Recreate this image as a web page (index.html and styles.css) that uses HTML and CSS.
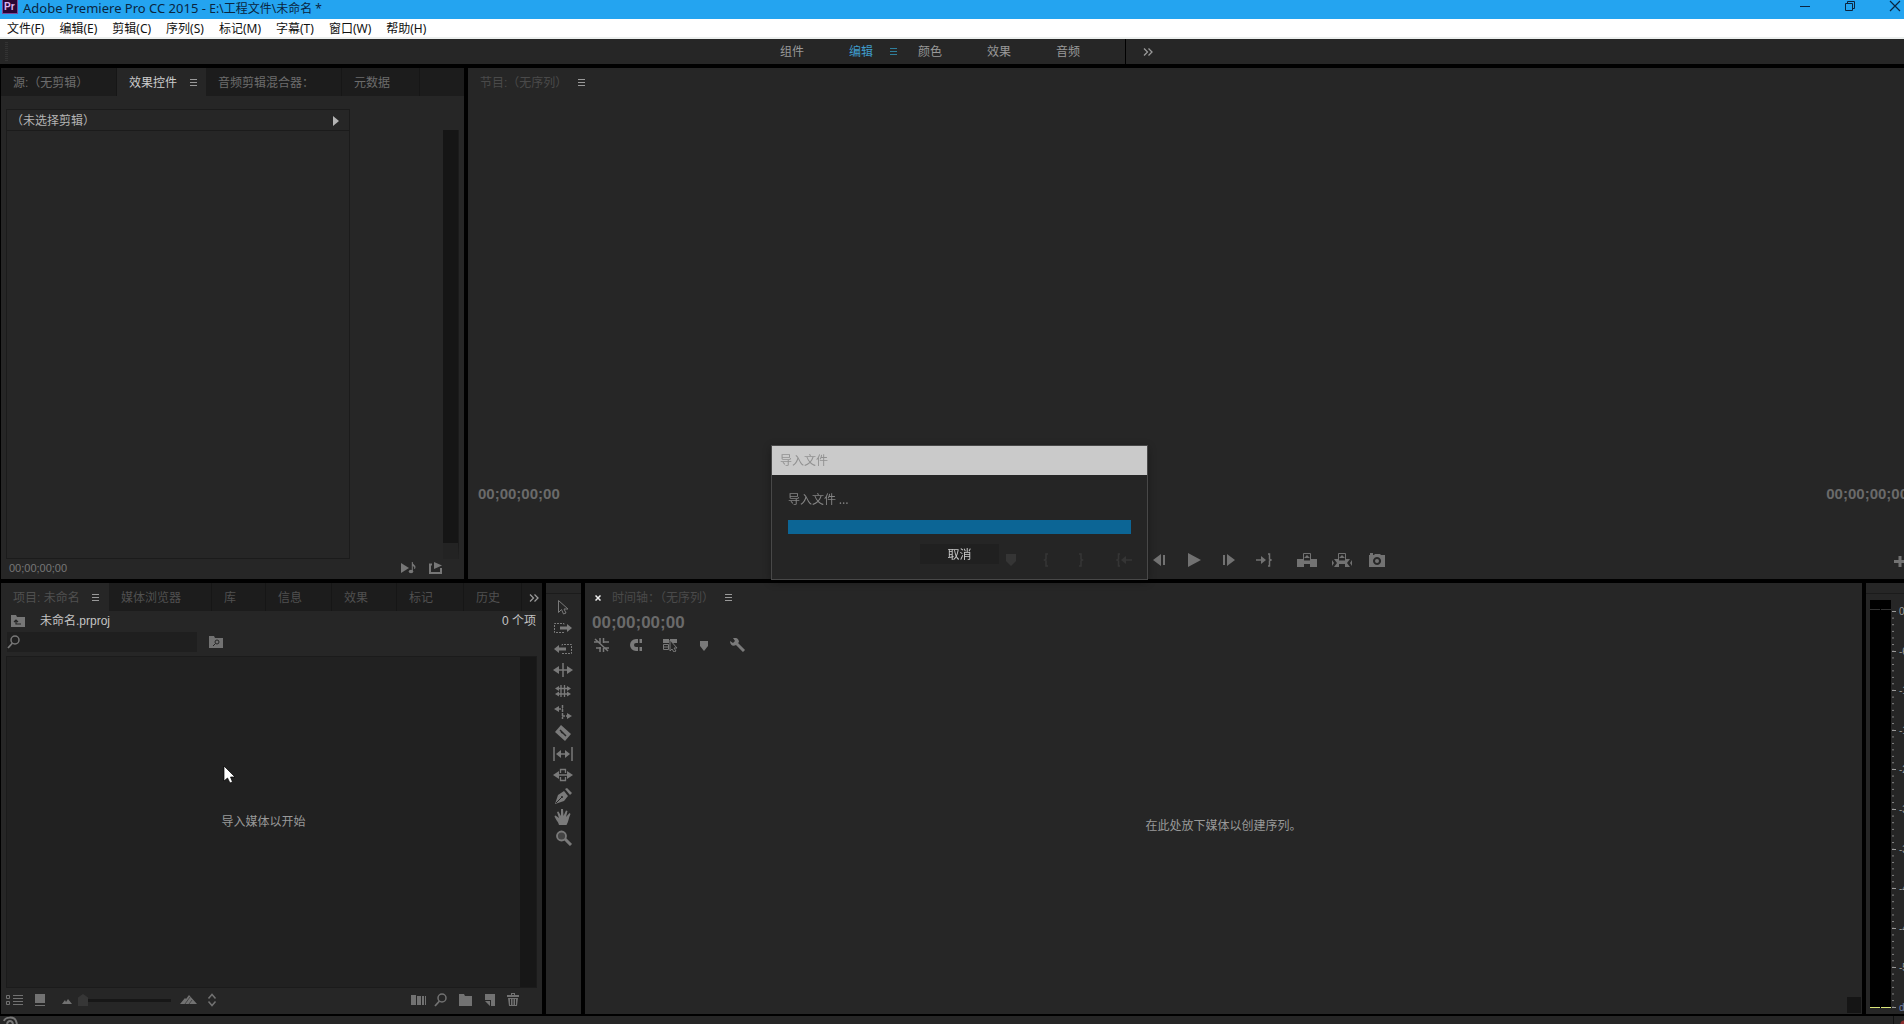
FILE: index.html
```html
<!DOCTYPE html>
<html lang="zh-CN">
<head>
    <meta charset="utf-8">
    <meta name="viewport" content="width=device-width, initial-scale=1.0">
    <title>Adobe Premiere Pro CC 2015</title>
    <link rel="stylesheet" href="styles.css">
</head>
<body>

    <!-- shared icons -->
    <svg class="defs" aria-hidden="true">
        <symbol id="menu" viewBox="0 0 8 8"><path d="M0 .5h7M0 3.5h7M0 6.5h7" stroke="currentColor"/></symbol>
        <symbol id="more" viewBox="0 0 10 8"><path d="M1 .5l3.5 3.5L1 7.5M5.500 .5L9 4 5.500 7.500" fill="none" stroke="currentColor" stroke-width="1.300"/></symbol>
        <symbol id="search" viewBox="0 0 14 14"><circle cx="8" cy="5" r="4" fill="none" stroke="currentColor" stroke-width="1.500"/><path d="M5.500 8L1 13" stroke="currentColor" stroke-width="1.800"/></symbol>
    </svg>

    <header class="titlebar">
        <svg class="logo" viewBox="0 0 16 16"><rect x=".5" y="-2" width="15" height="15.500" fill="#2a0634" stroke="#7a4a9a"/><text x="2" y="10" font-size="10" font-weight="bold" fill="#dcb4f0">Pr</text></svg>
        <h1>Adobe Premiere Pro CC 2015 - <span>E:\工程文件\未命名 *</span></h1>
        <div class="window-buttons">
            <button aria-label="最小化"><svg width="12" height="12"><path d="M1 6.500h10" stroke="#0a2540"/></svg></button>
            <button aria-label="还原"><svg width="12" height="12"><path d="M1.500 3.500h7v7h-7zM3.500 3V1.500h7v7H9" fill="none" stroke="#0a2540"/></svg></button>
            <button aria-label="关闭"><svg width="12" height="12"><path d="M1 1l10 10M11 1L1 11" stroke="#0a2540" stroke-width="1.200"/></svg></button>
        </div>
    </header>

    <nav class="menubar">
        <button>文件(F)</button>
        <button>编辑(E)</button>
        <button>剪辑(C)</button>
        <button>序列(S)</button>
        <button>标记(M)</button>
        <button>字幕(T)</button>
        <button>窗口(W)</button>
        <button>帮助(H)</button>
    </nav>

    <nav class="workspaces">
        <span class="grip"></span>
        <button>组件</button>
        <button class="on">编辑<svg class="burger"><use href="#menu"/></svg></button>
        <button>颜色</button>
        <button>效果</button>
        <button>音频</button>
        <button class="overflow" aria-label="更多工作区"><svg class="more"><use href="#more"/></svg></button>
    </nav>

    <main>
        <div class="row row-top">
            <section class="panel effects">
                <div class="tabs">
                    <button>源:（无剪辑）</button>
                    <button class="active">效果控件<svg class="burger"><use href="#menu"/></svg></button>
                    <button>音频剪辑混合器：</button>
                    <button>元数据</button>
                </div>
                <div class="effects-body">
                    <div class="clip">
                        <div class="clip-name">（未选择剪辑）<svg width="6" height="10"><path d="M0 0l6 5-6 5z" fill="#b4b4b4"/></svg></div>
                    </div>
                    <div class="clip-scroll"></div>
                </div>
                <div class="effects-foot">
                    <span>00;00;00;00</span>
                    <button aria-label="播放音频"><svg width="16" height="12" fill="#777"><path d="M0 1l8 5-8 5z"/><ellipse cx="10" cy="9.500" rx="2.300" ry="1.800"/><path d="M11.300 0v9.500" stroke="#777"/><path d="M11 0c1 3 5 3 3 7l-1-.5c1-2-1-2-2-3z"/></svg></button>
                    <button aria-label="导出"><svg width="16" height="12"><path d="M4 2.500H2V11h11V6" fill="none" stroke="#777" stroke-width="2"/><path d="M6 0l8 3.500-8 3.500z" fill="#777"/></svg></button>
                </div>
            </section>

            <section class="panel program">
                <div class="panel-title">节目:（无序列）<svg class="burger"><use href="#menu"/></svg></div>
                <div class="monitor"></div>
                <div class="times">
                    <span>00;00;00;00</span>
                    <span>00;00;00;00</span>
                </div>
                <div class="transport">
                    <div class="group">
                        <button aria-label="添加标记"><svg width="16" height="14"><path d="M3 1h10v7l-5 5-5-5z" fill="currentColor"/></svg></button>
                        <button aria-label="标记入点"><svg width="16" height="14"><path d="M10 1H8v5L6.500 7 8 8v5h2" fill="none" stroke="currentColor" stroke-width="1.500"/></svg></button>
                        <button aria-label="标记出点"><svg width="16" height="14"><path d="M6 1h2v5l1.500 1L8 8v5H6" fill="none" stroke="currentColor" stroke-width="1.500"/></svg></button>
                    </div>
                    <div class="group">
                        <button aria-label="转到入点"><svg width="16" height="14"><path d="M4 1H2.500v5L1 7l1.500 1v5H4M9 7h7" fill="none" stroke="currentColor" stroke-width="1.500"/><path d="M5 7l5-4v8z" fill="currentColor"/></svg></button>
                        <button aria-label="后退一帧"><svg width="16" height="14" fill="currentColor"><path d="M10 1v12L2 7zM12 2h2v10h-2z"/></svg></button>
                        <button aria-label="播放"><svg width="16" height="14" fill="currentColor"><path d="M2 0l13 7-13 7z"/></svg></button>
                        <button aria-label="前进一帧"><svg width="16" height="14" fill="currentColor"><path d="M2 2h2v10H2zM6 1v12l8-6z"/></svg></button>
                        <button aria-label="转到出点"><svg width="16" height="14"><path d="M12 1h1.500v5L15 7l-1.500 1v5H12M0 7h6" fill="none" stroke="currentColor" stroke-width="1.500"/><path d="M10 7L5 3v8z" fill="currentColor"/></svg></button>
                    </div>
                    <div class="group">
                        <button aria-label="提升"><svg width="20" height="14" fill="currentColor"><path d="M0 6h6v2h8V6h6v8h-7v-3H7v3H0zM7 5l3-3 3 3z"/><path d="M6.500 .5h7V8h-7z" fill="none" stroke="currentColor"/></svg></button>
                        <button aria-label="提取"><svg width="20" height="14" fill="currentColor"><path d="M2 6h4v2h8V6h4l-3 4 3 4h-5v-3H7v3H2l3-4zM0 7l2 3-2 3zM20 7l-2 3 2 3zM7 5l3-3 3 3z"/><path d="M6.500 .5h7V8h-7z" fill="none" stroke="currentColor"/></svg></button>
                        <button aria-label="导出帧"><svg width="18" height="14" fill="currentColor"><path fill-rule="evenodd" d="M1 2h1V0h3v2h1l1-1h5l1 1h4v12H1zM9 4a4 4 0 1 0 .1 0z"/><circle cx="9" cy="8" r="2"/></svg></button>
                    </div>
                    <button class="plus" aria-label="按钮编辑器"><svg width="12" height="12"><path d="M6 0v11M0 5.500h12" stroke="currentColor" stroke-width="3"/></svg></button>
                </div>
            </section>
        </div>

        <div class="row row-bottom">
            <section class="panel project">
                <div class="tabs">
                    <button class="active">项目: 未命名<svg class="burger"><use href="#menu"/></svg></button>
                    <button>媒体浏览器</button>
                    <button>库</button>
                    <button>信息</button>
                    <button>效果</button>
                    <button>标记</button>
                    <button>历史</button>
                    <button class="tabs-more" aria-label="更多面板"><svg class="more"><use href="#more"/></svg></button>
                </div>
                <div class="path">
                    <svg width="14" height="12"><path fill="#777" d="M0 0h5l1 2h8v10H0z"/><path d="M10 9H5V5M3 7l2-2 2 2" fill="none" stroke="#262626" stroke-width="1.200"/></svg>
                    <span>未命名.prproj</span>
                    <span class="count">0 个项</span>
                </div>
                <div class="find">
                    <label><svg class="search"><use href="#search"/></svg><input type="text" aria-label="搜索"></label>
                    <button aria-label="新建搜索素材箱"><svg width="14" height="12"><path fill="#727272" d="M0 0h5l1 2h8v10H0z"/><circle cx="8" cy="6" r="2" fill="none" stroke="#262626"/><path d="M6.500 7.500L4 10" stroke="#262626"/></svg></button>
                </div>
                <div class="bin">
                    <p>导入媒体以开始</p>
                    <div class="bin-scroll"></div>
                </div>
                <div class="bin-tools">
                    <button aria-label="列表视图"><svg width="18" height="12"><path d="M.5 1.500h3v3h-3zM.5 7.500h3v3h-3z" fill="none" stroke="currentColor"/><path d="M7 1.500h10M7 4.500h10M7 7.500h10M7 10.500h10" stroke="currentColor"/></svg></button>
                    <button class="icon-view" aria-label="图标视图"><svg width="10" height="12" fill="currentColor"><path d="M0 0h10v9H0zM0 11h10v1H0z"/></svg></button>
                    <button class="zoom-out" aria-label="缩小"><svg width="10" height="12" fill="currentColor"><path d="M0 10l3-4 1 2 2-3 4 5z"/></svg></button>
                    <input type="range" min="0" max="100" value="0" aria-label="缩放">
                    <button class="zoom-in" aria-label="放大"><svg width="18" height="12" fill="currentColor"><path d="M0 10l5-6 1 1 3-4 8 9z"/><path d="M5 10l5-7M9 10l3-4" stroke="#262626" stroke-width=".6"/></svg></button>
                    <button aria-label="排序图标"><svg width="10" height="14"><path d="M1.500 5.500l3.500-4 3.500 4M1.500 8.500l3.500 4 3.500-4" fill="none" stroke="currentColor" stroke-width="1.500"/></svg></button>
                    <span class="right">
                        <button aria-label="自动匹配序列"><svg width="16" height="12" fill="currentColor"><path d="M0 1h5v10H0zM6 2h4v9H6zM11 2h2v9h-2zM14 2h1v9h-1z"/></svg></button>
                        <button aria-label="查找"><svg class="search"><use href="#search"/></svg></button>
                        <button aria-label="新建素材箱"><svg width="14" height="12" fill="currentColor"><path d="M0 0h5l1 2h7v10H0z"/></svg></button>
                        <button aria-label="新建项"><svg width="12" height="12" fill="currentColor"><path d="M1 0h10v12H7V6H1zM1 7h5v5z"/></svg></button>
                        <button aria-label="清除"><svg width="12" height="14" fill="currentColor"><path fill-rule="evenodd" d="M0 2h4V0h4v2h4v2H0zM5 1v1h2V1zM1 5h10l-1 8H2zM3 6v6h1V6zM5.500 6v6h1V6zM8 6v6h1V6z"/></svg></button>
                    </span>
                </div>
            </section>

            <section class="panel tools">
                <button aria-label="选择"><svg><path d="M5.500 1.500v12l3-3 2 4.500 2.500-1-2-4h4z" fill="none" stroke="currentColor"/></svg></button>
                <button aria-label="向前选择轨道"><svg><path d="M11 4.500V3.500H1.500v9H11v-1" fill="none" stroke="currentColor" stroke-dasharray="2 1"/><path d="M7 6.500h7V4l5 4-5 4V9.500H7z" fill="currentColor"/></svg></button>
                <button aria-label="向后选择轨道"><svg><path d="M9 4.500V3.500h9.500v9H9v-1" fill="none" stroke="currentColor" stroke-dasharray="2 1"/><path d="M13 6.500H6V4L1 8l5 4V9.500h7z" fill="currentColor"/></svg></button>
                <button aria-label="波纹编辑"><svg><path d="M10 1v14M3 8h14" stroke="currentColor" stroke-width="1.500"/><path d="M0 8l6-4v8zM20 8l-6-4v8z" fill="currentColor"/></svg></button>
                <button aria-label="滚动编辑"><svg><path d="M8 2v12M11.500 2v12M4 5.500h12M4 11h12" stroke="currentColor" stroke-width="1.300"/><path d="M2 5.500L6 3v5zM18 5.500L14 3v5zM2 11l4-2.500v5zM18 11l-4-2.500v5z" fill="currentColor"/></svg></button>
                <button aria-label="比率拉伸"><svg><path d="M1 5l5-3v6zM19 12l-5-3v6z" fill="currentColor"/><path d="M5 5h5M9.500 1v14M9 12h6" fill="none" stroke="currentColor" stroke-width="1.500" stroke-dasharray="3 1"/></svg></button>
                <button aria-label="剃刀"><svg><path d="M8 0l10 9-6 7L2 7z" fill="currentColor"/><path d="M7 5l6 6M8 7l2 1 1 1" stroke="#262626" stroke-width="1.500"/></svg></button>
                <button aria-label="外滑"><svg><path d="M1 1v14M19 1v14" stroke="currentColor" stroke-width="1.500"/><path d="M6 8h8" stroke="currentColor" stroke-width="1.500"/><path d="M3 8l5-4v8zM17 8l-5-4v8z" fill="currentColor"/></svg></button>
                <button aria-label="内滑"><svg><path d="M0 8l6-4v8zM20 8l-6-4v8z" fill="currentColor"/><path d="M5 8h10M7.500 6V2.500h5V6M7.500 10v3.500h5V10" fill="none" stroke="currentColor" stroke-width="1.300"/></svg></button>
                <button aria-label="钢笔"><svg><path d="M2 16l3-9 6-4 4 5-4 5z" fill="currentColor"/><path d="M12 1l5 6 2-2-5-5z" fill="currentColor"/><path d="M3 15l6-6" stroke="#262626"/><circle cx="9" cy="9" r="1" fill="#262626"/></svg></button>
                <button aria-label="手形"><svg><path d="M6 16C5 12 2 10 1.500 7l1-.5L6 9 4 3l1.500-.5L8 7V0h2l.5 7L13 1.500l1.500.5L13 8l3.500-4 1 1c-2 4-2 8-4 11H7z" fill="currentColor"/></svg></button>
                <button aria-label="缩放"><svg><circle cx="8.500" cy="6" r="4.500" fill="#444" stroke="currentColor" stroke-width="1.800"/><path d="M12 9l6 6" stroke="currentColor" stroke-width="3"/></svg></button>
            </section>

            <section class="panel timeline">
                <div class="panel-title">
                    <button class="close" aria-label="关闭"><svg width="6" height="6"><path d="M.5 .5l5 5M5.500 .5l-5 5" stroke="#eee" stroke-width="1.500"/></svg></button>
                    时间轴：（无序列）<svg class="burger"><use href="#menu"/></svg>
                </div>
                <div class="now">00;00;00;00</div>
                <div class="timeline-tools">
                    <button aria-label="嵌套"><svg width="16" height="14"><path d="M6 0v5M9.500 0v5M6 9v5M9.500 10v4M0 4h5M9 4h6M2 10h5M11 10h4M1 1l13 12" stroke="currentColor" stroke-width="1.500"/></svg></button>
                    <button aria-label="对齐"><svg width="16" height="14"><path d="M10 3H8a4 4 0 0 0 0 8h2M11.500 3H14M11.500 11H14" fill="none" stroke="currentColor" stroke-width="4"/></svg></button>
                    <button aria-label="链接选择项"><svg width="16" height="14"><path d="M1 1h6v4H1zM8 1h7v4H8z" fill="currentColor"/><path d="M1.500 6.500h5v5h-5zM1 9h5" fill="none" stroke="currentColor"/><path d="M8 2v11l2-2 2 3 2-1-2-3h3z" fill="#262626" stroke="currentColor"/></svg></button>
                    <button aria-label="添加标记"><svg width="16" height="14"><path d="M4 3h8v5l-4 5-4-5z" fill="currentColor"/></svg></button>
                    <button aria-label="时间轴设置"><svg width="16" height="14"><path d="M6 5l8 8" stroke="currentColor" stroke-width="3"/><path d="M3 0l2 3-2 2-3-2c0 4 3 6 6 4l3-3c0-3-3-5-6-4z" fill="currentColor"/></svg></button>
                </div>
                <p class="drop">在此处放下媒体以创建序列。</p>
                <span class="corner"></span>
            </section>

            <section class="panel meters">
                <div class="levels"><i></i><i></i></div>
                <ol class="scale">
                    <li>0</li>
                    <li>-6</li>
                    <li>-12</li>
                    <li>-18</li>
                    <li>-24</li>
                    <li>-30</li>
                    <li>-36</li>
                    <li>-42</li>
                    <li>-48</li>
                    <li>-54</li>
                    <li class="unit">dB</li>
                </ol>
            </section>
        </div>
    </main>

    <footer>
        <svg width="18" height="8"><path d="M1 5c1-4 10-5 12 0l1 3M4 8c1-4 5-4 6 0" fill="none" stroke="#777" stroke-width="2"/></svg>
        <span class="alert"></span>
    </footer>

    <div class="dialog" role="dialog" aria-labelledby="dlg-title">
        <h2 id="dlg-title">导入文件</h2>
        <label for="import">导入文件 ...</label>
        <progress id="import" value="100" max="100"></progress>
        <button>取消</button>
    </div>

    <svg class="cursor" width="14" height="20"><path d="M1 1v15l3.500-3 2.500 5 2.500-1-2-5H12z" fill="#fff" stroke="#000" stroke-width=".7"/></svg>

</body>
</html>
```
FILE: styles.css
```css
* {
    box-sizing: border-box;
}

body {
    margin: 0;
    height: 100vh;
    display: flex;
    flex-direction: column;
    overflow: hidden;
    background: #000;
    color: #777;
    font: 12px/16px "Liberation Sans", "Noto Sans CJK SC", sans-serif;
}

button {
    display: flex;
    align-items: center;
    padding: 0;
    border: 0;
    background: none;
    color: inherit;
    font: inherit;
    white-space: nowrap;
}

svg {
    flex: none;
    display: block;
}

p, h1, h2 {
    margin: 0;
    font: inherit;
}

.defs {
    position: absolute;
    width: 0;
    height: 0;
}

.burger {
    width: 8px;
    height: 8px;
    margin-left: 13px;
    color: #999;
}

.more {
    width: 10px;
    height: 8px;
    color: #999;
}

.search {
    width: 14px;
    height: 14px;
}

/* window frame */

.titlebar {
    flex: none;
    display: flex;
    height: 19px;
    padding: 0 2px;
    background: #24a4f0;
    color: #0a2540;
}

.titlebar h1 {
    margin-left: 5px;
    font: 13px/16px "Noto Sans", "Noto Sans CJK SC", sans-serif;
}

.titlebar h1 span {
    font-size: 12px;
}

.logo {
    width: 16px;
    height: 16px;
}

.window-buttons {
    display: flex;
    gap: 33px;
    height: 12px;
    margin-left: auto;
    padding-right: 1px;
}

.menubar {
    flex: none;
    display: flex;
    gap: 15px;
    height: 20px;
    padding: 2px 0 0 7px;
    background: #fff;
    border-bottom: 2px solid #ecefee;
    color: #111;
    font-family: "Noto Sans", "Noto Sans CJK SC", sans-serif;
}

.workspaces {
    position: relative;
    flex: none;
    display: flex;
    justify-content: center;
    height: 25px;
    padding-left: 70px;
    background: #262626;
    color: #999;
}

.workspaces button {
    width: 69px;
    height: 25px;
}

.workspaces .on {
    color: #3f9ccb;
}

.workspaces .burger {
    margin-left: 17px;
    color: #2f7f9c;
}

.workspaces .overflow {
    border-left: 1px solid #000;
    padding-left: 17px;
}

.grip {
    position: absolute;
    left: 5px;
    top: 3px;
    width: 3px;
    height: 20px;
    background: repeating-linear-gradient(#333 0 1px, #262626 1px 2px);
}

/* panels */

main {
    flex: 1;
    min-height: 0;
    display: grid;
    grid-template-rows: 511fr 431fr;
    gap: 4px;
    padding: 4px 0 2px 1px;
}

.row {
    display: grid;
    gap: 4px;
    min-height: 0;
}

.row-top {
    grid-template-columns: 463fr 1436fr;
}

.row-bottom {
    grid-template-columns: 541fr 35px 1277fr 38px;
}

.panel {
    min-width: 0;
    min-height: 0;
    display: flex;
    flex-direction: column;
    overflow: hidden;
    background: #262626;
}

.tabs {
    flex: none;
    display: grid;
    height: 28px;
    background: #1c1c1c;
}

.tabs button {
    overflow: hidden;
    padding: 2px 0 0 12px;
    border-right: 1px solid #161616;
}

.tabs .active {
    background: #262626;
    border: 0;
}

.panel-title {
    flex: none;
    display: flex;
    align-items: center;
    height: 28px;
    padding: 2px 0 0 12px;
    color: #4a4a4a;
}

.effects .tabs {
    grid-template-columns: 116px 89px 136px 78px;
    color: #6c6c6c;
}

.effects .active {
    color: #ccc;
}

.effects-body {
    flex: 1;
    display: flex;
    justify-content: space-between;
    padding: 13px 5px 0;
}

.clip {
    width: 76%;
    border: 1px solid #1b1b1b;
}

.clip-name {
    display: flex;
    align-items: center;
    justify-content: space-between;
    height: 21px;
    padding: 1px 10px 0 4px;
    border-bottom: 1px solid #1b1b1b;
    color: #b4b4b4;
}

.clip-scroll {
    width: 16px;
    margin-top: 21px;
    border-right: 1px solid #1b1b1b;
    border-bottom: 16px solid #232323;
    background: #151515;
}

.effects-foot {
    flex: none;
    display: flex;
    align-items: center;
    gap: 11px;
    height: 20px;
    padding: 0 20px 2px 8px;
    font-size: 11px;
}

.effects-foot span {
    margin-right: auto;
}

.monitor {
    flex: 1;
}

.times {
    display: flex;
    justify-content: space-between;
    height: 24px;
    margin-right: -4px;
    padding-left: 10px;
    color: #6a6a6a;
    font: bold 15px/24px "Liberation Sans", sans-serif;
}

.transport {
    position: relative;
    display: flex;
    justify-content: center;
    gap: 8px;
    height: 26px;
    margin: 47px 0 0 16px;
    color: #727272;
}

.group {
    display: flex;
    height: 14px;
}

.group button {
    justify-content: center;
    width: 35px;
}

.plus {
    position: absolute;
    right: -2px;
    top: 3px;
}

/* project */

.project .tabs {
    grid-template-columns: 108px 103px 54px 66px 65px 67px 58px 1fr;
    color: #505050;
}

.project .active .burger {
    margin-left: 12px;
}

.project .tabs-more {
    padding-left: 7px;
    border: 0;
}

.path {
    display: flex;
    align-items: center;
    height: 20px;
    padding: 0 6px 0 10px;
    color: #c4c4c4;
}

.path span {
    margin-left: 15px;
}

.path .count {
    margin-left: auto;
}

.find {
    display: flex;
    align-items: center;
    gap: 12px;
    height: 25px;
    padding: 0 6px 4px;
}

.find label {
    display: flex;
    align-items: center;
    width: 190px;
    height: 20px;
    background: #1f1f1f;
}

.find input {
    flex: 1;
    min-width: 0;
    padding: 0 4px;
    border: 0;
    background: none;
    color: #c4c4c4;
    font: inherit;
}

.bin {
    flex: 1;
    display: flex;
    margin: 0 5px;
    border: 1px solid #1b1b1b;
    background: #212121;
    color: #999;
}

.bin p {
    flex: 1;
    align-self: center;
    text-align: center;
}

.bin-scroll {
    width: 16px;
    background: #171717;
}

.bin-tools {
    display: flex;
    align-items: center;
    height: 26px;
    padding: 0 23px 2px 5px;
    color: #727272;
}

.icon-view,
.zoom-out,
.zoom-in {
    justify-content: center;
    width: 32px;
}

.bin-tools .zoom-out {
    width: 22px;
}

.bin-tools input {
    width: 93px;
    height: 12px;
    margin: 0;
    padding: 0;
    appearance: none;
    background: linear-gradient(#171717, #171717) 0 5px / 100% 3px no-repeat;
}

.bin-tools input::-webkit-slider-thumb {
    appearance: none;
    width: 10px;
    height: 12px;
    background: #363636;
    clip-path: polygon(50% 0, 100% 30%, 100% 100%, 0 100%, 0 30%);
}

.bin-tools .zoom-in {
    width: 36px;
}

.right {
    display: flex;
    align-items: center;
    gap: 11px;
    margin-left: auto;
}

.right button:first-child {
    margin-right: -4px;
}

/* tools */

.tools {
    align-items: flex-start;
    gap: 5px;
    padding: 16px 0 0 7px;
    background: linear-gradient(#1b1b1b, #1b1b1b) 0 10px / 100% 1px no-repeat #262626;
    color: #7a7a7a;
}

.tools svg {
    width: 20px;
    height: 16px;
}

/* timeline */

.timeline {
    position: relative;
}

.timeline .panel-title {
    padding-left: 10px;
}

.close {
    margin-right: 11px;
}

.timeline .burger,
.program .burger {
    margin-left: 11px;
}

.now {
    padding-left: 7px;
    color: #6a6a6a;
    font: bold 17px/24px "Liberation Sans", sans-serif;
}

.timeline-tools {
    display: flex;
    gap: 18px;
    padding: 3px 9px;
    color: #7a7a7a;
}

.drop {
    flex: 1;
    display: grid;
    place-content: center;
    padding-bottom: 17px;
    color: #999;
}

.corner {
    position: absolute;
    right: 1px;
    bottom: 1px;
    width: 14px;
    height: 16px;
    background: #151515;
}

/* audio meters */

.meters {
    flex-direction: row;
    padding: 17px 0 6px 4px;
    background: linear-gradient(#1b1b1b, #1b1b1b) 0 10px / 100% 1px no-repeat #262626;
}

.levels {
    flex: none;
    display: flex;
    gap: 1px;
    width: 21px;
    background: #000;
}

.levels i {
    flex: 1;
    border-bottom: 1px solid #dce87a;
    background: linear-gradient(#333, #333) 0 9px / 100% 1px no-repeat;
}

.scale {
    flex: 1;
    display: flex;
    flex-direction: column;
    margin: 11px 0 0 1px;
    padding: 0;
    list-style: none;
    font-size: 10px;
    line-height: 1px;
    white-space: nowrap;
    color: #999;
}

.scale li {
    flex: 1;
    padding-left: 7px;
    background:
        linear-gradient(#999, #999) 0 0 / 4px 1px no-repeat,
        linear-gradient(#888 1px, #262626 1px) 0 0 / 2px 16.6% repeat-y;
}

.scale .unit {
    flex: none;
    height: 1px;
    color: #6f7fa8;
}

/* status bar */

footer {
    flex: none;
    display: flex;
    justify-content: space-between;
    height: 8px;
    padding-left: 3px;
    background: #262626;
}

.alert {
    width: 11px;
    border-left: 1px solid #111;
    background: radial-gradient(circle at 10px 8px, #8c3030 3px, #262626 4px);
}

/* import progress */

.dialog {
    position: fixed;
    left: calc(50% - 181px);
    top: calc(50% - 67px);
    width: 377px;
    height: 135px;
    display: flex;
    flex-direction: column;
    border: 1px solid #484848;
    background: rgba(38, 38, 38, .8);
    box-shadow: 0 2px 8px rgba(0, 0, 0, .3);
    color: #858585;
    font-family: "Noto Sans CJK SC", sans-serif;
}

.dialog h2 {
    height: 29px;
    padding-left: 8px;
    background: #cacaca;
    color: #919191;
    line-height: 28px;
}

.dialog label {
    margin: 16px 16px 0;
}

.dialog progress {
    display: block;
    width: auto;
    height: 14px;
    margin: 13px 16px 10px;
    appearance: none;
    border: 0;
}

.dialog progress::-webkit-progress-bar {
    background: #1b1b1b;
}

.dialog progress::-webkit-progress-value {
    background: #0c6595;
}

.dialog button {
    align-self: center;
    justify-content: center;
    width: 79px;
    height: 20px;
    background: #202020;
    color: #c8c8c8;
}

.cursor {
    position: absolute;
    left: 223px;
    top: 765px;
}
```
